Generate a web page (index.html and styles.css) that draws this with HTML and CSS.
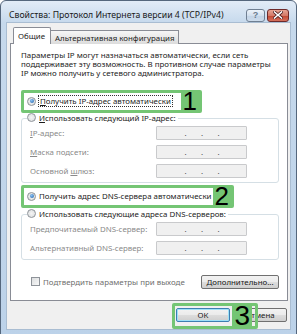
FILE: index.html
```html
<!DOCTYPE html>
<html lang="ru">
<head>
    <meta charset="UTF-8">
    <title>Свойства: Протокол Интернета версии 4 (TCP/IPv4)</title>
    <link rel="stylesheet" href="styles.css">
</head>
<body>
    <div class="window">
        <div class="titlebar">
            <span class="title">Свойства: Протокол Интернета версии 4 (TCP/IPv4)</span>
            <div class="caption">
                <span class="cbtn help">?</span>
                <span class="cbtn close">
                    <svg width="10" height="8" viewBox="0 0 10 8">
                        <path d="M1.5 1 L8.5 7 M8.5 1 L1.5 7" stroke="#4a1a1a" stroke-width="3" stroke-linecap="square"/>
                        <path d="M1.5 1 L8.5 7 M8.5 1 L1.5 7" stroke="#fff" stroke-width="1.6" stroke-linecap="square"/>
                    </svg>
                </span>
            </div>
        </div>

        <div class="client">
            <div class="tabs">
                <span class="tab active">Общие</span>
                <span class="tab">Альтернативная конфигурация</span>
            </div>

            <div class="page">
                <p class="intro">Параметры IP могут назначаться автоматически, если сеть<br>поддерживает эту возможность. В противном случае параметры<br>IP можно получить у сетевого администратора.</p>

                <div class="mark mark-1">
                    <label class="radio checked"><span class="dot"></span><span class="focus"><u>П</u>олучить IP-адрес автоматически</span></label>
                    <span class="num">1</span>
                </div>

                <div class="group group-ip">
                    <div class="group-head">
                        <label class="radio"><span class="dot"></span><span><u>И</u>спользовать следующий IP-адрес:</span></label>
                    </div>
                    <div class="field"><span class="label"><u>I</u>P-адрес:</span><span class="ip"><i>.</i><i>.</i><i>.</i></span></div>
                    <div class="field"><span class="label"><u>М</u>аска подсети:</span><span class="ip"><i>.</i><i>.</i><i>.</i></span></div>
                    <div class="field"><span class="label">Основной <u>ш</u>люз:</span><span class="ip"><i>.</i><i>.</i><i>.</i></span></div>
                </div>

                <div class="mark mark-2">
                    <label class="radio checked"><span class="dot"></span><span>Получить адрес DNS-сервера автоматически</span></label>
                    <span class="num">2</span>
                </div>

                <div class="group group-dns">
                    <div class="group-head">
                        <label class="radio"><span class="dot"></span><span>Использовать следующие адреса DNS-серверов:</span></label>
                    </div>
                    <div class="field"><span class="label">Предпочитаемый DNS-сервер:</span><span class="ip"><i>.</i><i>.</i><i>.</i></span></div>
                    <div class="field"><span class="label">Альтернативный DNS-сервер:</span><span class="ip"><i>.</i><i>.</i><i>.</i></span></div>
                </div>

                <div class="bottom-row">
                    <label class="check"><span class="box"></span><span>Подтвердить параметры при выходе</span></label>
                    <span class="btn adv"><u>Д</u>ополнительно...</span>
                </div>
            </div>

            <div class="buttons">
                <div class="ok-wrap">
                    <span class="btn ok">ОК</span>
                    <div class="mark-3"><span class="num">3</span></div>
                </div>
                <span class="btn">Отмена</span>
            </div>
        </div>
    </div>
</body>
</html>
```

FILE: styles.css
```css
* { box-sizing: border-box; }
html, body {
    margin: 0;
    height: 100%;
    overflow: hidden;
}
body {
    background: #fff;
    font-family: 'Noto Sans', 'Open Sans', sans-serif;
    font-size: 7.9px;
    color: #1c1c1c;
}
u { text-decoration-thickness: 1px; text-underline-offset: 1px; }

.window {
    width: 297px;
    height: 340px;
    border: 1px solid #55677d;
    border-radius: 6px 6px 0 0;
    background: linear-gradient(#e2ecf7, #c6d9ec 22px, #bcd2e9);
    padding: 0 6px;
    display: flex;
    flex-direction: column;
}
.titlebar {
    height: 22px;
    padding-top: 6px;
    display: flex;
    align-items: center;
}
.title {
    margin-left: 2px;
    font-size: 8.7px;
    color: #1a1a1a;
    flex: 1;
}
.caption {
    display: flex;
    gap: 2px;
    margin-right: 1px;
}
.cbtn {
    height: 13px;
    border: 1px solid #6f7f92;
    border-radius: 3px;
    display: flex;
    align-items: center;
    justify-content: center;
}
.help {
    width: 19px;
    background: linear-gradient(#eef4fa, #d3e0ee 50%, #c2d3e6 51%, #cddcec);
    color: #6a7b8e;
    font-family: 'Liberation Sans', sans-serif;
    font-weight: bold;
    font-size: 9px;
}
.close {
    width: 22px;
    border-color: #6d2a2a;
    background: linear-gradient(#e8a493, #d47a68 50%, #c2462f 51%, #d5705c);
}

.client {
    width: 283px;
    height: 306px;
    background: #f0f0f0;
    padding: 4px 2px 0 3px;
    box-shadow: 0 0 0 1px #a9bdd2;
}
.tabs {
    display: flex;
    align-items: flex-end;
    padding-left: 3px;
    margin-bottom: -1px;
    position: relative;
    z-index: 1;
}
.tab {
    height: 14px;
    padding: 0 3px 0 4px;
    border: 1px solid #898c95;
    border-left: none;
    border-bottom: none;
    background: linear-gradient(#f6f6f6, #e9e9e9 50%, #dcdcdc);
    display: flex;
    align-items: center;
    white-space: nowrap;
}
.tab.active {
    height: 17px;
    padding: 0 5px 0 4px;
    border-left: 1px solid #898c95;
    border-radius: 2px 2px 0 0;
    background: #fff;
}

.page {
    height: 258px;
    background: #fff;
    border: 1px solid #898c95;
    padding: 7px 8px 0 10px;
}
.intro {
    margin: 0;
    line-height: 9.2px;
    white-space: nowrap;
}

.radio, .check {
    display: flex;
    align-items: center;
    gap: 3px;
    white-space: nowrap;
}
.radio .dot {
    width: 9px;
    height: 9px;
    border: 1px solid #8e9399;
    border-radius: 50%;
    background: radial-gradient(#f4f4f4, #d9dbdd);
    display: flex;
    align-items: center;
    justify-content: center;
    flex: none;
}
.radio.checked .dot::after {
    content: "";
    width: 4px;
    height: 4px;
    border-radius: 50%;
    background: radial-gradient(circle at 40% 35%, #8cc3f5, #1d5fa8);
}
.focus {
    outline: 1px dotted #333;
    outline-offset: 0;
    padding: 0 1px;
}

.mark {
    display: flex;
    align-items: center;
    height: 23px;
    border: 3px solid #74c574;
    border-radius: 2px;
    padding-left: 3px;
}
.mark-1 {
    margin-top: 11px;
    width: 181px;
}
.mark-2 {
    margin-top: 2px;
    width: 213px;
}
.num {
    margin-left: auto;
    font-family: 'Liberation Sans', sans-serif;
    font-size: 26px;
    line-height: 17px;
    color: #000;
    background: #74c574;
    padding: 0 2px;
}

.group {
    border: 1px solid #d5dfe5;
    border-radius: 3px;
    width: 258px;
    padding: 0 0 4px 8px;
}
.group-ip { margin-top: 5px; }
.group-dns { margin-top: 6px; }
.group-head {
    height: 10px;
    margin: -6px 0 0 -3px;
    display: flex;
}
.group-head .radio {
    background: #fff;
    padding-right: 2px;
}
.field {
    display: flex;
    align-items: center;
    height: 14px;
    margin-top: 5px;
    color: #8a8a8a;
}
.group-head + .field { margin-top: 3px; }
.label { width: 126px; }
.ip {
    width: 91px;
    height: 14px;
    border: 1px solid #c9cacc;
    border-radius: 1px;
    background: #f0f0f0;
    display: flex;
    justify-content: space-evenly;
    padding: 0 12px 0 13px;
    color: #555;
    line-height: 12px;
}
.ip i { font-style: normal; }

.bottom-row {
    display: flex;
    align-items: center;
    justify-content: space-between;
    margin-top: 15px;
    width: 258px;
}
.check {
    margin-left: 10px;
    color: #6e6e6e;
}
.check .box {
    width: 9px;
    height: 9px;
    border: 1px solid #8e9399;
    background: linear-gradient(135deg, #dcdedf, #f7f7f7);
}

.btn {
    height: 14px;
    border: 1px solid #707070;
    border-radius: 2px;
    background: linear-gradient(#f2f2f2, #ebebeb 50%, #dddddd 51%, #cfcfcf);
    display: flex;
    align-items: center;
    justify-content: center;
    white-space: nowrap;
    color: #1a1a1a;
}
.adv { width: 78px; }

.buttons {
    display: flex;
    justify-content: flex-end;
    gap: 3px;
    margin-top: 7px;
    padding-right: 1px;
}
.buttons .btn { width: 54px; }
.ok-wrap { position: relative; }
.btn.ok {
    border-color: #3c7fb1;
    box-shadow: inset 0 0 0 1px #9ee0f7;
}
.mark-3 {
    position: absolute;
    left: -4px;
    top: -5px;
    right: -28px;
    bottom: -7px;
    border: 3px solid #74c574;
    border-radius: 2px;
    display: flex;
    align-items: center;
}
.mark-3 .num { font-size: 28px; line-height: 20px; margin-right: 3px; }
```
